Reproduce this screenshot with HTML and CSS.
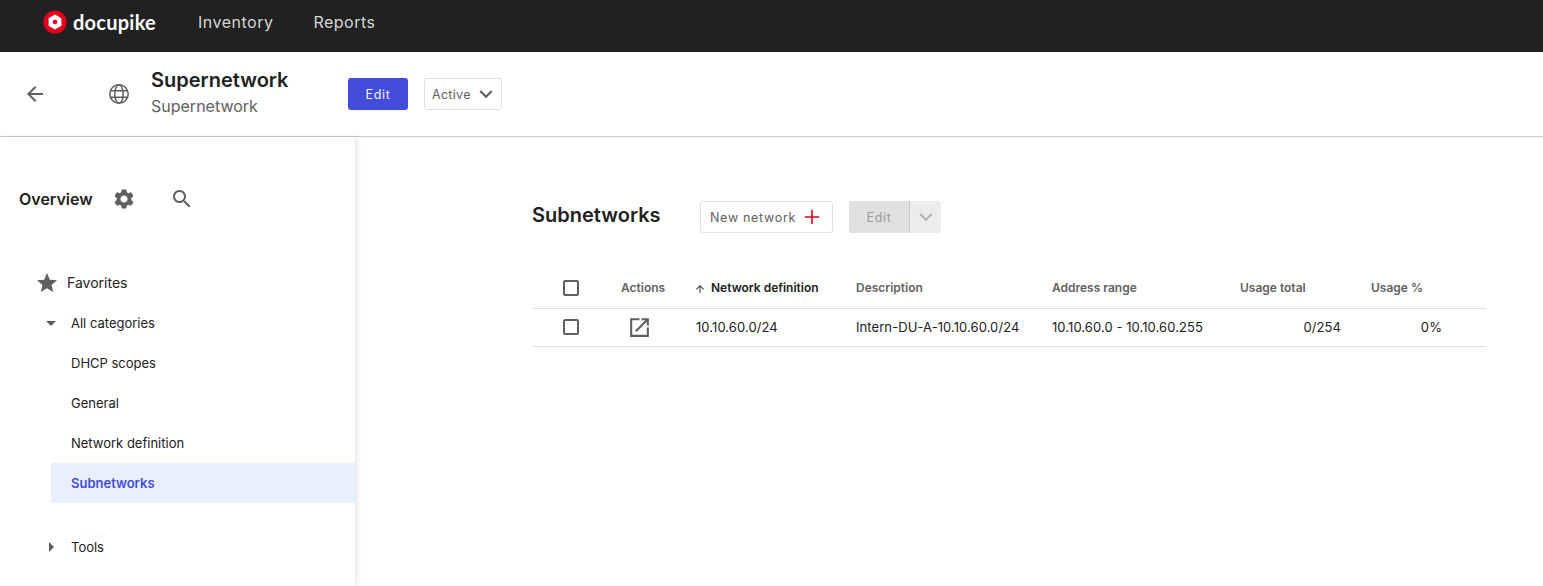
FILE: index.html
```html
<!DOCTYPE html>
<html lang="en">
<head>
  <meta charset="UTF-8">
  <title>Docupike - Supernetwork</title>
  <link rel="stylesheet" href="styles.css">
</head>
<body>
  <header class="topbar">
    <div class="brand">
      <svg class="brand-icon" viewBox="0 0 24 24" width="24" height="24">
        <circle cx="12" cy="12" r="11.6" fill="#e2001a"/>
        <path d="M12 4.6l6.4 3.7v7.4L12 19.4l-6.4-3.7V8.3z" fill="#fff"/>
        <path d="M12 9.4l2.2 1.3v2.6L12 14.6l-2.2-1.3v-2.6z" fill="#e2001a"/>
      </svg>
      <span class="brand-name">docupike</span>
    </div>
    <nav class="topnav">
      <a>Inventory</a>
      <a>Reports</a>
    </nav>
  </header>

  <section class="objectbar">
    <svg class="back-icon" viewBox="0 0 24 24" width="24" height="24"><path d="M20 11H7.83l5.59-5.59L12 4l-8 8 8 8 1.41-1.41L7.83 13H20z"/></svg>
    <svg class="globe-icon" viewBox="0 0 24 24" width="24" height="24">
      <g fill="none" stroke="#5f5f5f" stroke-width="1.5">
        <circle cx="12" cy="12" r="9.2"/>
        <ellipse cx="12" cy="12" rx="4.2" ry="9.2"/>
        <path d="M3.4 8.8h17.2M3.4 15.2h17.2"/>
      </g>
    </svg>
    <div class="object-title">
      <h1>Supernetwork</h1>
      <p>Supernetwork</p>
    </div>
    <button class="btn btn-primary">Edit</button>
    <button class="btn btn-status">Active
      <svg viewBox="0 0 24 24" width="26" height="26"><path d="M7.41 8.59L12 13.17l4.59-4.58L18 10l-6 6-6-6z"/></svg>
    </button>
  </section>

  <div class="layout">
    <aside class="sidebar">
      <div class="side-head">
        <h2>Overview</h2>
        <svg class="gear" viewBox="0 0 24 24" width="24" height="24"><path d="M19.14 12.94c.04-.3.06-.61.06-.94 0-.32-.02-.64-.07-.94l2.03-1.58c.18-.14.23-.41.12-.61l-1.92-3.32c-.12-.22-.37-.29-.59-.22l-2.39.96c-.5-.38-1.03-.7-1.62-.94l-.36-2.54c-.04-.24-.24-.41-.48-.41h-3.84c-.24 0-.43.17-.47.41l-.36 2.54c-.59.24-1.13.57-1.62.94l-2.39-.96c-.22-.08-.47 0-.59.22L2.74 8.87c-.12.21-.08.47.12.61l2.03 1.58c-.05.3-.09.63-.09.94s.02.64.07.94l-2.03 1.58c-.18.14-.23.41-.12.61l1.92 3.32c.12.22.37.29.59.22l2.39-.96c.5.38 1.03.7 1.62.94l.36 2.54c.05.24.24.41.48.41h3.84c.24 0 .44-.17.47-.41l.36-2.54c.59-.24 1.13-.56 1.62-.94l2.39.96c.22.08.47 0 .59-.22l1.92-3.32c.12-.22.07-.47-.12-.61l-2.01-1.58zM12 15.6c-1.98 0-3.6-1.62-3.6-3.6s1.62-3.6 3.6-3.6 3.6 1.62 3.6 3.6-1.62 3.6-3.6 3.6z"/></svg>
        <svg class="search" viewBox="0 0 24 24" width="24" height="24"><path d="M15.5 14h-.79l-.28-.27C15.41 12.59 16 11.11 16 9.5 16 5.91 13.09 3 9.5 3S3 5.91 3 9.5 5.91 16 9.5 16c1.61 0 3.09-.59 4.23-1.57l.27.28v.79l5 4.99L20.49 19l-4.99-5zm-6 0C7.01 14 5 11.99 5 9.5S7.01 5 9.5 5 14 7.01 14 9.5 11.99 14 9.5 14z"/></svg>
      </div>
      <div class="favorites">
        <svg viewBox="0 0 24 24" width="24" height="24"><path d="M12 17.27L18.18 21l-1.64-7.03L22 9.24l-7.19-.61L12 2 9.19 8.63 2 9.24l5.46 4.73L5.82 21z"/></svg>
        <span>Favorites</span>
      </div>
      <div class="tree-row tree-parent"><i class="caret-down"></i>All categories</div>
      <div class="tree-row">DHCP scopes</div>
      <div class="tree-row">General</div>
      <div class="tree-row">Network definition</div>
      <div class="tree-row tree-active">Subnetworks</div>
      <div class="tree-row tree-parent tree-tools"><i class="caret-right"></i>Tools</div>
    </aside>

    <main class="content">
      <div class="content-head">
        <h2>Subnetworks</h2>
        <button class="btn btn-new">New network
          <svg viewBox="0 0 16 16" width="16" height="16"><path d="M7.2 1h1.6v6.2H15v1.6H8.8V15H7.2V8.8H1V7.2h6.2z" fill="#e2001a"/></svg>
        </button>
        <div class="split-btn">
          <span class="split-main">Edit</span>
          <span class="split-arrow"><svg viewBox="0 0 24 24" width="26" height="26"><path d="M7.41 8.59L12 13.17l4.59-4.58L18 10l-6 6-6-6z"/></svg></span>
        </div>
      </div>

      <table class="grid">
        <colgroup>
          <col class="c-check"><col class="c-actions"><col class="c-net"><col class="c-desc">
          <col class="c-range"><col class="c-total"><col class="c-pct"><col>
        </colgroup>
        <thead>
          <tr>
            <th class="cell-check"><span class="checkbox"></span></th>
            <th class="cell-actions">Actions</th>
            <th class="sorted">
              <svg class="sort-arrow" viewBox="0 0 24 24" width="12" height="12"><path d="M4 12l1.41 1.41L11 7.83V20h2V7.83l5.58 5.59L20 12l-8-8-8 8z"/></svg>Network definition
            </th>
            <th>Description</th>
            <th>Address range</th>
            <th>Usage total</th>
            <th>Usage %</th>
            <th></th>
          </tr>
        </thead>
        <tbody>
          <tr>
            <td class="cell-check"><span class="checkbox"></span></td>
            <td class="cell-open">
              <svg viewBox="0 0 24 24" width="25" height="25"><path d="M3 3h9v2H5v14h14v-7h2v9H3zM14 3h7v7h-2V6.41l-9.83 9.83-1.41-1.41L17.59 5H14z" fill="#5f5f5f"/></svg>
            </td>
            <td>10.10.60.0/24</td>
            <td>Intern-DU-A-10.10.60.0/24</td>
            <td>10.10.60.0 - 10.10.60.255</td>
            <td class="num">0/254</td>
            <td class="num">0%</td>
            <td></td>
          </tr>
        </tbody>
      </table>
    </main>
  </div>
</body>
</html>
```

FILE: styles.css
```css
* {
  box-sizing: border-box;
}
html, body {
  height: 100%;
}
body {
  margin: 0;
  font-family: 'Inter', sans-serif;
  color: #212121;
  background: #fff;
  overflow: hidden;
}
button {
  font-family: inherit;
}

/* top bar */
.topbar {
  height: 52px;
  background: #212121;
  display: flex;
  align-items: center;
  padding: 0 0 8px 43px;
}
.brand {
  display: flex;
  align-items: center;
  width: 155px;
}
.brand-icon {
  flex: none;
}
.brand-name {
  margin-left: 6px;
  color: #fff;
  font-family: 'Lato', sans-serif;
  font-weight: 700;
  font-size: 20px;
  letter-spacing: 0.25px;
}
.topnav {
  display: flex;
  gap: 40px;
}
.topnav a {
  color: #d6d6d6;
  font-size: 16px;
  letter-spacing: 0.5px;
}

/* object bar */
.objectbar {
  height: 85px;
  border-bottom: 1px solid #ccc;
  display: flex;
  align-items: center;
  padding-left: 23px;
}
.back-icon {
  fill: #5f5f5f;
  flex: none;
}
.globe-icon {
  margin-left: 60px;
  flex: none;
}
.object-title {
  margin: -2px 0 0 20px;
  width: 197px;
}
.object-title h1 {
  margin: 0;
  font-size: 20px;
  font-weight: 600;
  line-height: 26px;
}
.object-title p {
  margin: 0;
  font-size: 16px;
  line-height: 26px;
  color: #616161;
}
.btn {
  height: 32px;
  border-radius: 3px;
  font-size: 12.5px;
  letter-spacing: 0.7px;
  display: flex;
  align-items: center;
  padding: 0;
}
.btn-primary {
  width: 60px;
  justify-content: center;
  background: #444cdc;
  color: #f4f4f4;
  border: none;
}
.btn-status {
  margin-left: 16px;
  width: 78px;
  padding-left: 7px;
  gap: 2px;
  background: #fff;
  color: #616161;
  border: 1px solid #e0e0e0;
  letter-spacing: 0.3px;
}
.btn-status svg {
  fill: #5f5f5f;
}

/* sidebar */
.layout {
  display: flex;
  height: calc(100% - 137px);
}
.sidebar {
  width: 355px;
  flex: none;
  box-shadow: 2px 0 5px rgba(0, 0, 0, 0.1);
  font-size: 13px;
}
.side-head {
  display: flex;
  align-items: center;
  height: 24px;
  margin-top: 50px;
  padding-left: 19px;
}
.side-head h2 {
  margin: 0;
  width: 93px;
  font-size: 16px;
  font-weight: 600;
}
.side-head svg {
  fill: #5f5f5f;
  flex: none;
}
.search {
  margin-left: 34px;
}
.favorites {
  display: flex;
  align-items: center;
  height: 40px;
  margin-top: 52px;
  padding-left: 35px;
  font-size: 14px;
}
.favorites svg {
  fill: #5f5f5f;
  margin-right: 8px;
}
.favorites span {
  margin-top: -2px;
}
.tree-row {
  height: 40px;
  margin-left: 51px;
  padding-left: 20px;
  display: flex;
  align-items: center;
  position: relative;
}
.tree-active {
  background: #e8f0fe;
  color: #444cdc;
  font-weight: 600;
}
.tree-tools {
  margin-top: 24px;
}
.caret-down {
  position: absolute;
  left: -5px;
  top: 18px;
  border: 5px solid transparent;
  border-top-color: #5f5f5f;
  border-bottom: none;
}
.caret-right {
  position: absolute;
  left: -2px;
  top: 15px;
  border: 5px solid transparent;
  border-left-color: #5f5f5f;
  border-right: none;
}

/* content */
.content {
  flex: 1;
  padding: 64px 57px 0 178px;
}
.content-head {
  display: flex;
  align-items: center;
  height: 32px;
}
.content-head h2 {
  margin: 0;
  width: 167px;
  font-size: 20px;
  font-weight: 600;
  position: relative;
  top: -2px;
  left: -1px;
}
.btn-new {
  width: 133px;
  padding-left: 9px;
  gap: 8px;
  background: #fff;
  color: #616161;
  border: 1px solid #e0e0e0;
}
.split-btn {
  display: flex;
  height: 32px;
  margin-left: 16px;
  border-radius: 3px;
  overflow: hidden;
  background: #ececec;
  font-size: 12.5px;
  letter-spacing: 0.7px;
  color: #9a9a9a;
}
.split-main {
  width: 61px;
  background: #e0e0e0;
  border-right: 1px solid #c8c8c8;
  display: flex;
  align-items: center;
  justify-content: center;
}
.split-arrow {
  width: 31px;
  display: flex;
  align-items: center;
  justify-content: center;
}
.split-arrow svg {
  fill: #b4b4b4;
}

/* table */
.grid {
  width: 953px;
  margin: 35px 0 0 0;
  border-collapse: collapse;
  table-layout: fixed;
  font-size: 13px;
}
.c-check { width: 75px; }
.c-actions { width: 72px; }
.c-net { width: 160px; }
.c-desc { width: 196px; }
.c-range { width: 188px; }
.c-total { width: 131px; }
.c-pct { width: 101px; }
.grid th {
  height: 40px;
  padding: 0 0 0 16px;
  font-size: 12px;
  font-weight: 600;
  text-align: left;
  color: #616161;
  border-bottom: 1px solid #e0e0e0;
}
.grid td {
  height: 38px;
  padding: 0 16px;
  letter-spacing: 0.08px;
  border-bottom: 1px solid #e0e0e0;
}
.grid .cell-check {
  padding: 0 0 0 30px;
}
.grid .cell-actions {
  padding-left: 13px;
}
.grid .cell-open {
  padding: 0 0 0 19px;
}
.grid .cell-open svg {
  display: block;
}
.grid .sorted {
  color: #212121;
}
.sort-arrow {
  margin: 0 5px -3px -2px;
  fill: #424242;
}
.checkbox {
  display: block;
  width: 16px;
  height: 16px;
  border: 2px solid #5f5f5f;
  border-radius: 2px;
}
.grid .num {
  padding-right: 14px;
  text-align: right;
}
```
